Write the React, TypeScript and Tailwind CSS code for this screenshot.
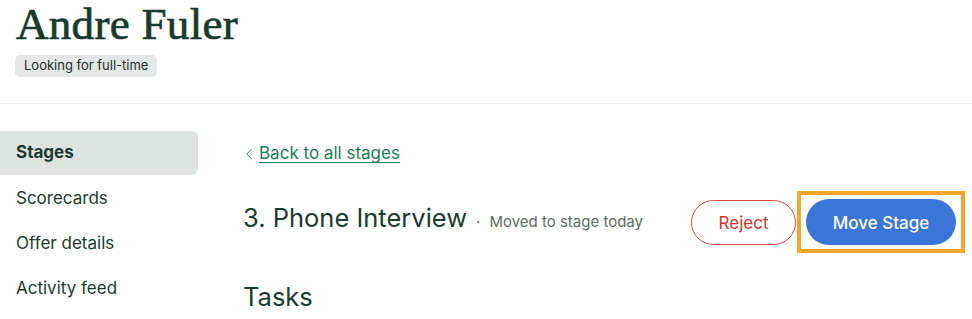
import React from "react";
import { ChevronLeft } from "lucide-react";

const navItems = ["Stages", "Scorecards", "Offer details", "Activity feed"];

export default function App() {
    return (
        <div className="w-[972px] h-[319px] overflow-hidden bg-white text-[#1c3a30] font-['Inter',sans-serif]">
            {/* Candidate header */}
            <div className="px-4">
                <h1 className="font-['Liberation_Serif',serif] text-[45px] leading-[48px] font-normal tracking-[0.3px] text-[#183a2e] [-webkit-text-stroke:0.7px_#183a2e]">
                    Andre Fuler
                </h1>
                <span className="inline-flex items-center mt-[7px] -ml-px h-[22px] px-[9px] rounded-[5px] bg-[#e3e7e5] text-[13px] text-[#1f2f29]">
                    Looking for full-time
                </span>
            </div>
            <div className="mt-[26px] border-t border-[#ececec]" />

            <div className="flex mt-[29px]">
                {/* Sidebar */}
                <nav className="w-[198px] shrink-0 flex flex-col gap-[3px]">
                    {navItems.map((item, i) => (
                        <div
                            key={item}
                            className={`h-[42px] flex items-center pl-4 text-[17px] rounded-r-[6px] ${
                                i === 0 ? "bg-[#dde4e0] font-bold -mt-[2px] h-[44px]" : ""
                            }`}
                        >
                            {item}
                        </div>
                    ))}
                </nav>

                {/* Stage detail */}
                <div className="flex-1 ml-[45px] mr-[7px]">
                    <a className="h-[42px] flex items-center gap-[1px] text-[17px] text-[#17805a]">
                        <ChevronLeft className="w-[18px] h-[18px] -ml-[3px]" strokeWidth={1.3} />
                        <span className="underline underline-offset-[3px] decoration-1">Back to all stages</span>
                    </a>

                    <div className="flex items-center justify-between mt-[16px]">
                        <div className="flex items-baseline mb-[7px]">
                            <h2 className="text-[25.5px] font-normal">3. Phone Interview</h2>
                            <span className="mx-[9px] text-[15px] text-[#5b6d65]">·</span>
                            <span className="text-[15px] text-[#5b6d65]">Moved to stage today</span>
                        </div>
                        <div className="flex items-center gap-px">
                            <button className="w-[105px] h-[45px] pt-[3px] rounded-full border border-[#d84a3f] text-[#d2352b] text-[17px] bg-white">
                                Reject
                            </button>
                            <div className="border-4 border-[#f9a52c] px-[5px] py-[4px]">
                                <button className="w-[150px] h-[46px] pt-[3px] rounded-full bg-[#3a75d8] text-white text-[17px] font-medium">
                                    Move Stage
                                </button>
                            </div>
                        </div>
                    </div>

                    <h3 className="mt-[25px] text-[25.5px] font-normal">Tasks</h3>
                </div>
            </div>
        </div>
    );
}
